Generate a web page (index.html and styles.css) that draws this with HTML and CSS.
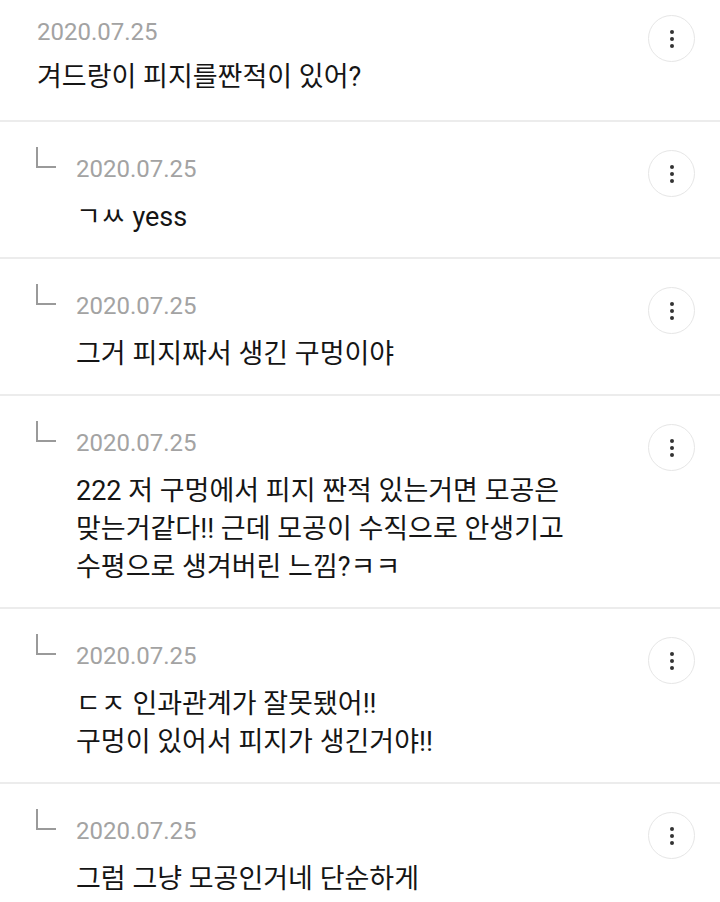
FILE: index.html
```html
<!DOCTYPE html>
<html lang="ko">
<head>
  <meta charset="UTF-8" />
  <title>댓글</title>
  <meta name="viewport" content="width=device-width, initial-scale=1.0" />
  <link rel="stylesheet" href="styles.css">
</head>
<body>

<div class="comments">

  <div class="comment first">
    <div class="body">
      <div class="date">2020.07.25</div>
      <div class="text">겨드랑이 피지를짠적이 있어?</div>
    </div>
    <button class="more"><span></span><span></span><span></span></button>
  </div>

  <div class="comment reply">
    <div class="arrow"></div>
    <div class="body">
      <div class="date">2020.07.25</div>
      <div class="text">ㄱㅆ yess</div>
    </div>
    <button class="more"><span></span><span></span><span></span></button>
  </div>

  <div class="comment reply">
    <div class="arrow"></div>
    <div class="body">
      <div class="date">2020.07.25</div>
      <div class="text">그거 피지짜서 생긴 구멍이야</div>
    </div>
    <button class="more"><span></span><span></span><span></span></button>
  </div>

  <div class="comment reply">
    <div class="arrow"></div>
    <div class="body">
      <div class="date">2020.07.25</div>
      <div class="text">222 저 구멍에서 피지 짠적 있는거면 모공은<br>맞는거같다!! 근데 모공이 수직으로 안생기고<br>수평으로 생겨버린 느낌?ㅋㅋ</div>
    </div>
    <button class="more"><span></span><span></span><span></span></button>
  </div>

  <div class="comment reply">
    <div class="arrow"></div>
    <div class="body">
      <div class="date">2020.07.25</div>
      <div class="text">ㄷㅈ 인과관계가 잘못됐어!!<br>구멍이 있어서 피지가 생긴거야!!</div>
    </div>
    <button class="more"><span></span><span></span><span></span></button>
  </div>

  <div class="comment reply">
    <div class="arrow"></div>
    <div class="body">
      <div class="date">2020.07.25</div>
      <div class="text">그럼 그냥 모공인거네 단순하게</div>
    </div>
    <button class="more"><span></span><span></span><span></span></button>
  </div>

</div>

</body>
</html>
```

FILE: styles.css
```css
body {
  margin: 0;
  background: #fff;
  color: #111;
  font-family: Roboto, "Noto Sans CJK KR", sans-serif;
}
.comments {
  width: 720px;
}
.comment {
  display: flex;
  align-items: flex-start;
  padding: 31px 25px 21px 37px;
  border-bottom: 2px solid #ececec;
}
.comment.first {
  padding-top: 16px;
  padding-bottom: 24px;
}
.arrow {
  width: 18px;
  height: 19px;
  margin: -6px 20px 0 -1px;
  border-left: 2px solid #9a9a9a;
  border-bottom: 2px solid #9a9a9a;
  flex-shrink: 0;
}
.body {
  flex: 1;
}
.date {
  font-size: 24px;
  line-height: 32px;
  color: #a3a3a3;
}
.text {
  margin-top: 13px;
  font-size: 27px;
  line-height: 38px;
  color: #151515;
}
.first .text {
  margin-top: 10px;
}
.more {
  width: 47px;
  height: 47px;
  margin-top: -3px;
  border: 1px solid #e6e6e6;
  border-radius: 50%;
  background: #fff;
  display: flex;
  flex-direction: column;
  align-items: center;
  justify-content: center;
  gap: 3px;
  padding: 0;
  flex-shrink: 0;
}
.first .more {
  margin-top: -1px;
}
.more span {
  width: 4px;
  height: 4px;
  border-radius: 50%;
  background: #333;
}
```
